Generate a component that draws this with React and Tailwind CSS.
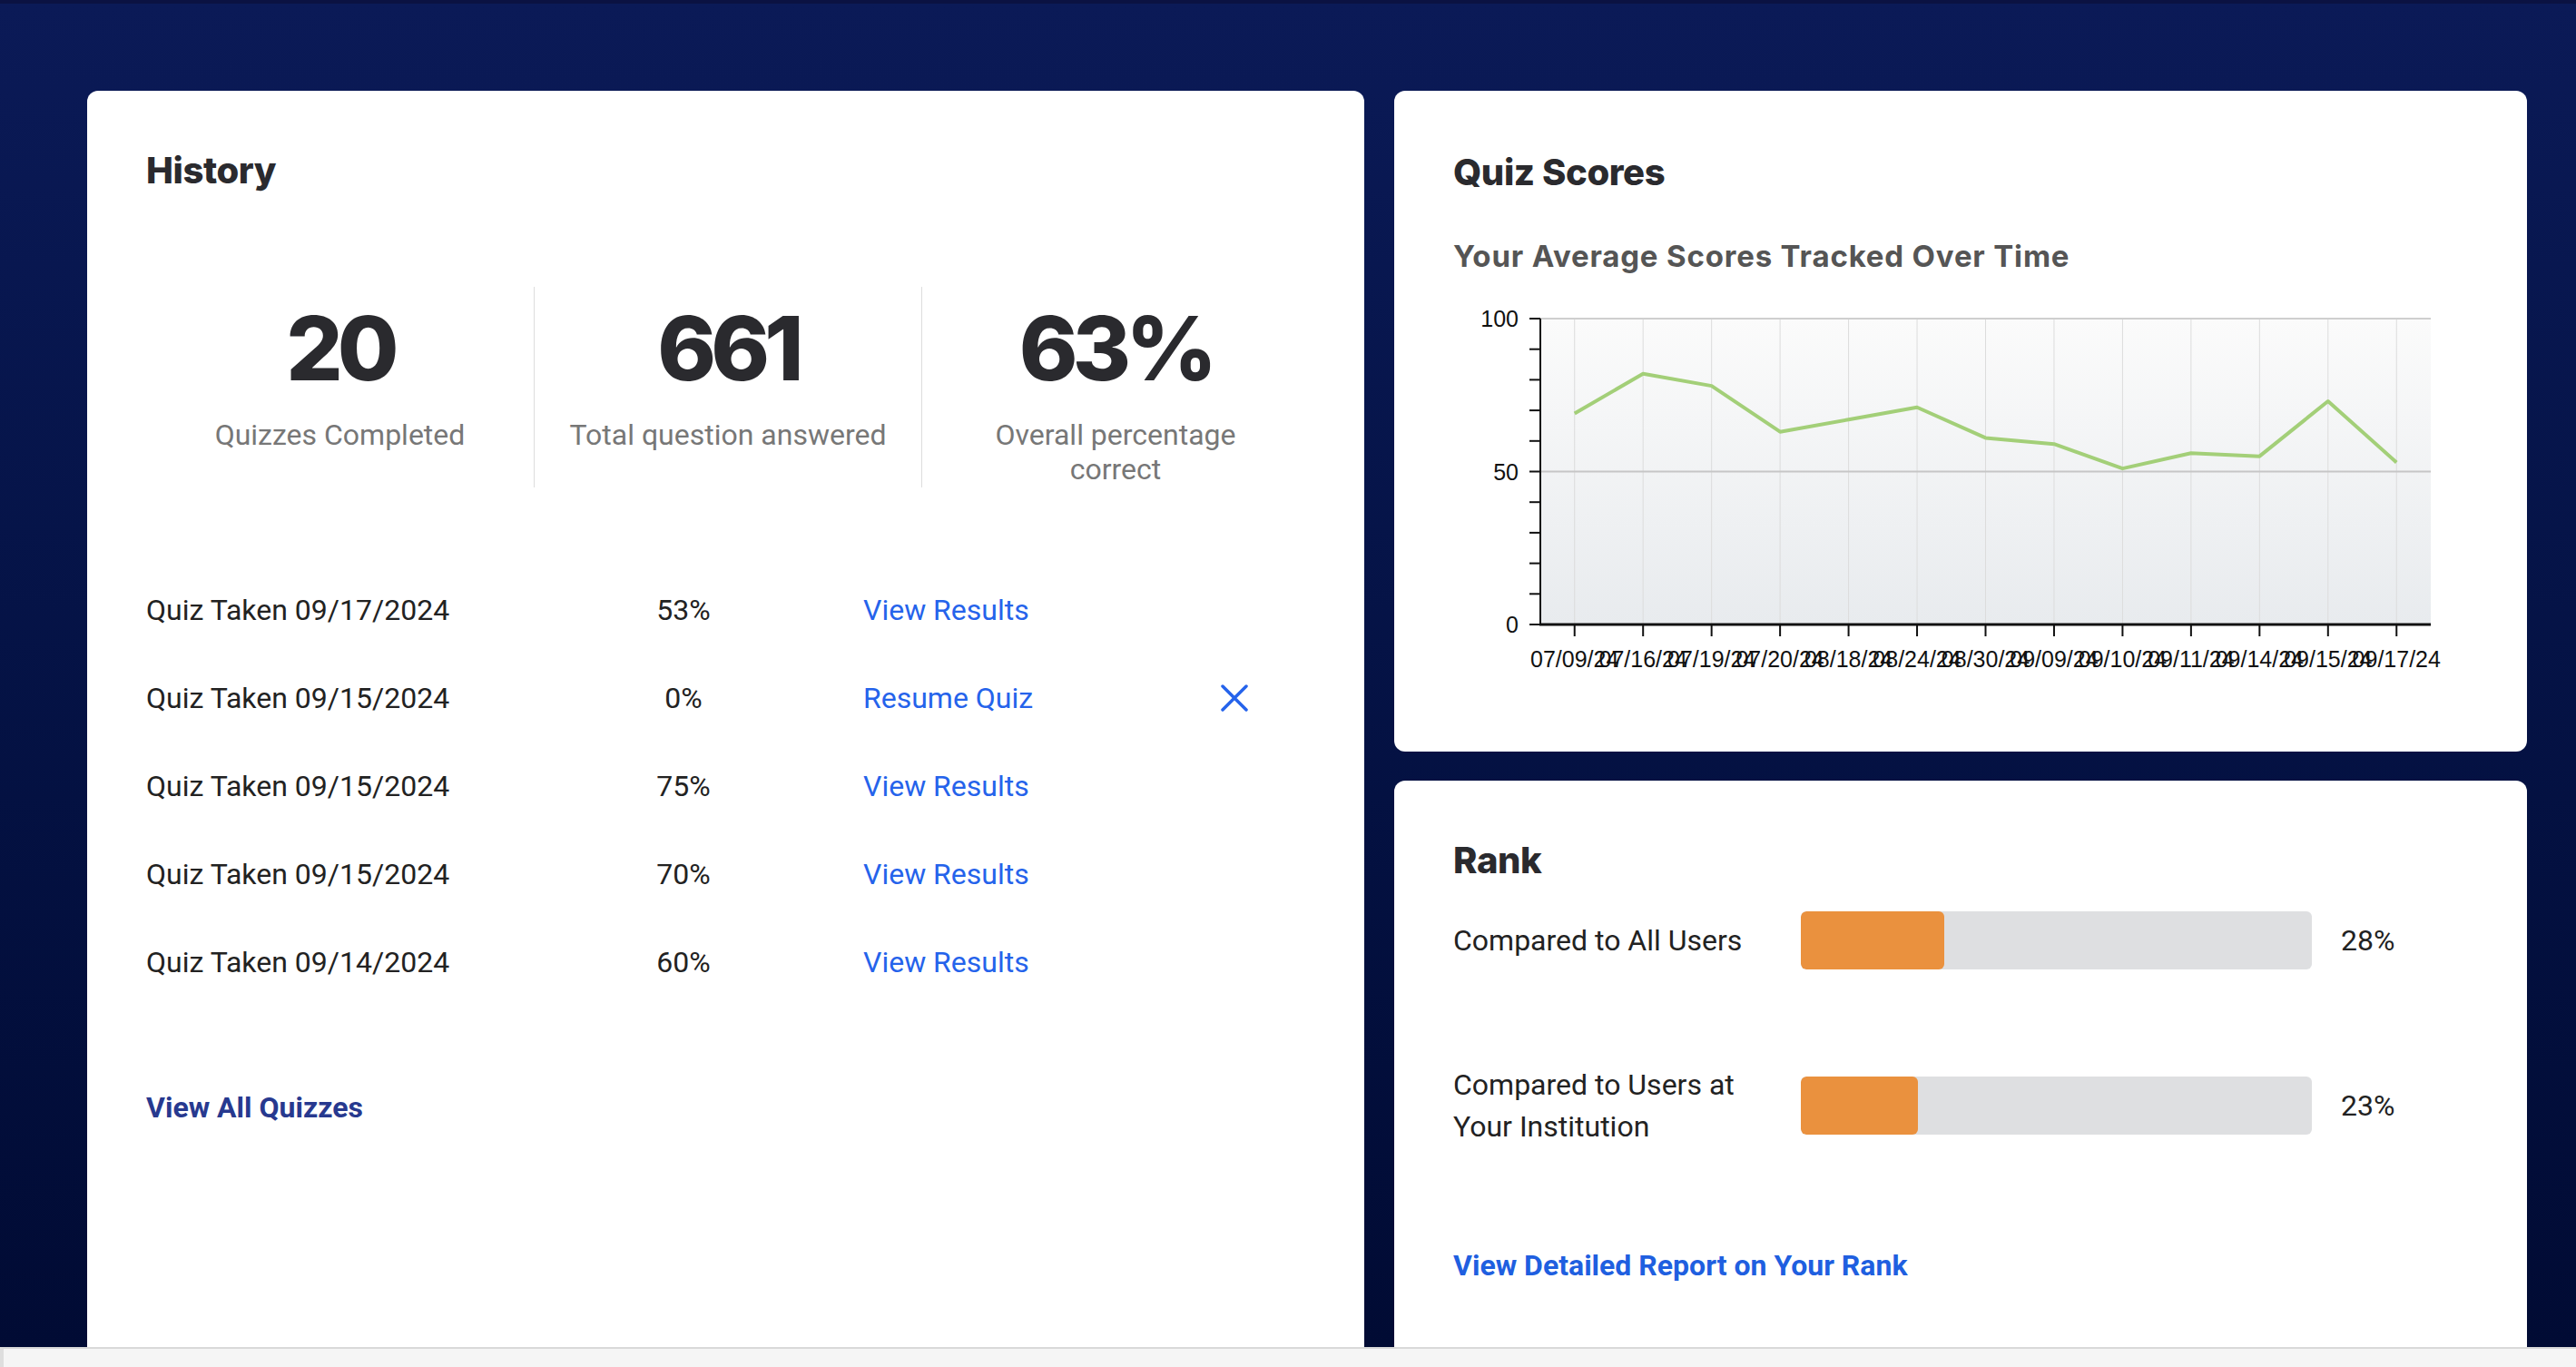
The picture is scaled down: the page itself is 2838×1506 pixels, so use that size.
import React from "react";

const quizzes = [
  { date: "09/17/2024", pct: "53%", action: "View Results" },
  { date: "09/15/2024", pct: "0%", action: "Resume Quiz", removable: true },
  { date: "09/15/2024", pct: "75%", action: "View Results" },
  { date: "09/15/2024", pct: "70%", action: "View Results" },
  { date: "09/14/2024", pct: "60%", action: "View Results" },
];

const scores = [
  { label: "07/09/24", value: 69 },
  { label: "07/16/24", value: 82 },
  { label: "07/19/24", value: 78 },
  { label: "07/20/24", value: 63 },
  { label: "08/18/24", value: 67 },
  { label: "08/24/24", value: 71 },
  { label: "08/30/24", value: 61 },
  { label: "09/09/24", value: 59 },
  { label: "09/10/24", value: 51 },
  { label: "09/11/24", value: 56 },
  { label: "09/14/24", value: 55 },
  { label: "09/15/24", value: 73 },
  { label: "09/17/24", value: 53 },
];

const ranks = [
  { label: "Compared to All Users", value: 28 },
  { label: "Compared to Users at Your Institution", value: 23 },
];

function StatBlock({ value, label, first }) {
  return (
    <div className={`flex flex-col items-center pt-[18px] ${first ? "" : "border-l border-[#dddddd]"}`}>
      <div className="text-[98px] leading-[100px] font-extrabold tracking-[-0.06em] text-[#2a2a2e]" style={{ fontFamily: "Inter, sans-serif" }}>
        {value}
      </div>
      <div className="mt-[26px] text-[32px] leading-[38px] text-[#777777] text-center max-w-[362px]">{label}</div>
    </div>
  );
}

function ScoreChart() {
  const left = 96;
  const right = 1077;
  const top = 31;
  const bottom = 368;
  const w = right - left;
  const h = bottom - top;
  const step = w / scores.length;
  const xs = scores.map((_, i) => left + (i + 0.5) * step);
  const y = (v) => bottom - (v / 100) * h;
  const points = scores.map((s, i) => `${xs[i]},${y(s.value)}`).join(" ");

  return (
    <svg width="1110" height="430" className="block" style={{ fontFamily: '"Liberation Sans", Arial, sans-serif' }}>
      <defs>
        <linearGradient id="plotBg" x1="0" y1="0" x2="0" y2="1">
          <stop offset="0" stopColor="#fbfbfb" />
          <stop offset="1" stopColor="#e8ebee" />
        </linearGradient>
      </defs>
      <rect x={left} y={top} width={w} height={h} fill="url(#plotBg)" />
      {xs.map((x, i) => (
        <line key={i} x1={x} y1={top} x2={x} y2={bottom} stroke="#dcdcdc" strokeWidth="1" />
      ))}
      <line x1={left} y1={top} x2={right} y2={top} stroke="#cfcfcf" strokeWidth="2" />
      <line x1={left} y1={y(50)} x2={right} y2={y(50)} stroke="#c6c6c6" strokeWidth="2" />
      {Array.from({ length: 11 }).map((_, i) => (
        <line key={i} x1={left - 12} y1={top + (h * i) / 10} x2={left} y2={top + (h * i) / 10} stroke="#111" strokeWidth="2" />
      ))}
      {xs.map((x, i) => (
        <line key={i} x1={x} y1={bottom} x2={x} y2={bottom + 13} stroke="#111" strokeWidth="2" />
      ))}
      <line x1={left} y1={top} x2={left} y2={bottom + 1} stroke="#111" strokeWidth="2" />
      <line x1={left - 1} y1={bottom} x2={right} y2={bottom} stroke="#111" strokeWidth="3" />
      <text x="72" y={top + 9} textAnchor="end" fontSize="25" fill="#111">100</text>
      <text x="72" y={y(50) + 9} textAnchor="end" fontSize="25" fill="#111">50</text>
      <text x="72" y={bottom + 9} textAnchor="end" fontSize="25" fill="#111">0</text>
      {scores.map((s, i) => (
        <text key={i} x={xs[i]} y="415" textAnchor="middle" fontSize="25" fill="#111">{s.label}</text>
      ))}
      <polyline points={points} fill="none" stroke="#a3cf78" strokeWidth="4" strokeLinejoin="round" />
    </svg>
  );
}

function CloseIcon() {
  return (
    <svg width="32" height="32" viewBox="0 0 32 32" fill="none" stroke="#2563eb" strokeWidth="3.5" strokeLinecap="round">
      <path d="M3 3 L29 29 M29 3 L3 29" />
    </svg>
  );
}

function CardTitle({ children }) {
  return (
    <h2 className="text-[40px] leading-[60px] font-extrabold text-[#2a2a2e] tracking-[-0.01em]" style={{ fontFamily: "Inter, sans-serif" }}>
      {children}
    </h2>
  );
}

export default function App() {
  return (
    <div className="h-[1506px] w-full flex flex-col overflow-hidden bg-[#f5f5f5]" style={{ fontFamily: "Roboto, 'Liberation Sans', sans-serif" }}>
      <div className="flex-1 min-h-0 overflow-hidden border-t-4 border-[#0b1242] bg-gradient-to-b from-[#0b1a57] to-[#010b34] pl-[96px] pr-[54px] pt-[96px]">
        <div className="grid grid-cols-[1407px_1248px] gap-[33px] items-start">
          {/* History */}
          <div className="bg-white rounded-[12px] h-[1500px] pl-[65px] pr-[61px] pt-[58px]">
            <CardTitle>History</CardTitle>
            <div className="mt-[98px] grid grid-cols-3 h-[221px]">
              <StatBlock first value="20" label="Quizzes Completed" />
              <StatBlock value="661" label="Total question answered" />
              <StatBlock value="63%" label="Overall percentage correct" />
            </div>
            <div className="mt-[86px] flex flex-col">
              {quizzes.map((q, i) => (
                <div key={i} className="grid grid-cols-[512px_160px_511px_32px] items-center h-[97px] text-[32px] leading-[48px] text-[#222222]">
                  <span>Quiz Taken {q.date}</span>
                  <span className="text-center">{q.pct}</span>
                  <span className="pl-[118px] text-[#2563eb]">{q.action}</span>
                  <span>{q.removable && <CloseIcon />}</span>
                </div>
              ))}
            </div>
            <div className="mt-[88px] text-[32px] leading-[48px] font-bold text-[#27398f]">View All Quizzes</div>
          </div>

          {/* Right column */}
          <div className="flex flex-col gap-[32px]">
            <div className="bg-white rounded-[12px] h-[728px] pl-[65px] pr-[40px] pt-[60px]">
              <CardTitle>Quiz Scores</CardTitle>
              <div className="mt-[38px] text-[33px] leading-[48px] font-bold tracking-[0.025em] text-[#555555]" style={{ fontFamily: "Inter, sans-serif" }}>
                Your Average Scores Tracked Over Time
              </div>
              <div className="mt-[14px]">
                <ScoreChart />
              </div>
            </div>

            <div className="bg-white rounded-[12px] h-[700px] pl-[65px] pr-[40px] pt-[58px]">
              <CardTitle>Rank</CardTitle>
              <div className="mt-[26px] flex flex-col gap-[104px]">
                {ranks.map((r, i) => (
                  <div key={i} className="grid grid-cols-[340px_563px_auto] gap-x-[43px] items-center min-h-[64px]">
                    <span className="text-[32px] leading-[46px] text-[#222222]">{r.label}</span>
                    <div className="h-[64px] rounded-[6px] bg-[#dedfe1] overflow-hidden">
                      <div className="h-full rounded-[6px] bg-[#ea913e]" style={{ width: `${r.value}%` }} />
                    </div>
                    <span className="-ml-[11px] text-[32px] leading-[46px] text-[#222222]">{r.value}%</span>
                  </div>
                ))}
              </div>
              <div className="mt-[106px] text-[32px] leading-[48px] font-bold text-[#1f5fe0]">View Detailed Report on Your Rank</div>
            </div>
          </div>
        </div>
      </div>
      <div className="h-[22px] shrink-0 border-t-2 border-[#d9d9d9] border-l-4 border-l-[#dedede] bg-[#f5f5f5]" />
    </div>
  );
}
